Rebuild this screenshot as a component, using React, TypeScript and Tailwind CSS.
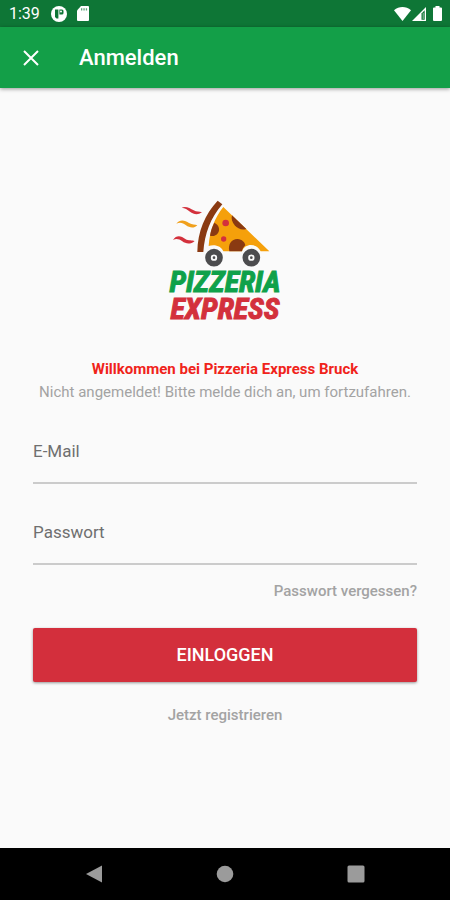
import { useState } from "react";

// ─── Logo ───────────────────────────────────────────────────────────────────

function PizzaCar() {
    return (
        <svg viewBox="30 24 330 210" className="h-[70px] w-[110px]" aria-hidden="true">
            <g fill="#d3303c">
                <path d="M65 53 C76 47 90 54 101 61 C110 66 118 64 126 67 C112 77 100 72 90 65 C81 58 76 54 65 53Z" />
                <path d="M39 150 C50 133 64 138 76 147 C86 154 96 149 104 153 C92 164 77 162 67 154 C57 147 49 145 39 150Z" />
            </g>
            <path d="M49 101 C60 87 75 91 87 99 C97 105 105 103 112 106 C101 117 88 113 78 106 C69 99 61 96 49 101Z" fill="#f0a01c" />
            <path d="M173 32 L187 43 C151 84 134 132 130 186 L112 186 C113 124 135 72 173 32Z" fill="#8a3a12" />
            <path d="M190 51 L328 184 L302 184 C289 158 254 160 246 184 L190 184 C184 168 164 162 146 168 C149 123 164 83 190 51Z" fill="#f5a00b" />
            <g fill="#8a3a12">
                <path d="M216 76 L259 117 C246 121 233 117 224 106 C216 96 213 86 216 76Z" />
                <path d="M163 98 C177 104 181 119 174 129 C168 138 158 140 150 137 C152 122 157 109 163 98Z" />
                <path d="M208 184 C203 162 216 146 233 147 C246 148 255 157 256 166 C251 171 247 177 246 184Z" />
            </g>
            <circle cx="197" cy="99" r="10" fill="#d3303c" />
            <circle cx="191" cy="147" r="8" fill="#d3303c" />
            <g fill="#fafafa" stroke="#4c4c4e" strokeWidth="17">
                <circle cx="162" cy="203" r="18" />
                <circle cx="274" cy="203" r="18" />
            </g>
            <circle cx="162" cy="203" r="4" fill="#4c4c4e" />
            <circle cx="274" cy="203" r="4" fill="#4c4c4e" />
        </svg>
    );
}

function Logo() {
    return (
        <div className="flex flex-col items-center">
            <PizzaCar />
            <div className="text-center font-['Roboto_Condensed','Liberation_Sans_Narrow',Roboto,sans-serif] text-[30px] leading-[27px] font-bold italic">
                <p className="text-[#0fa14a] [-webkit-text-stroke:1px_#0fa14a]">PIZZERIA</p>
                <p className="text-[#d3303c] [-webkit-text-stroke:1px_#d3303c]">EXPRESS</p>
            </div>
        </div>
    );
}

// ─── System bars ────────────────────────────────────────────────────────────

function StatusBar() {
    return (
        <div className="flex h-[27px] items-center bg-[#0e7636] pr-2 pl-[9px] text-white">
            <span className="text-base leading-none">1:39</span>
            <svg viewBox="0 0 16 16" className="ml-[11px] size-4" aria-hidden="true">
                <circle cx="8" cy="8" r="8" fill="#fff" />
                <path d="M4 3.5h3.4v9H5.5L4 11z" fill="#0e7636" />
                <path d="M8.400 3.500H11a1.500 1.500 0 0 1 1.500 1.500v2A1.500 1.500 0 0 1 11 8.500H8.400z" fill="#0e7636" />
                <circle cx="10" cy="5.600" r="1" fill="#fff" />
            </svg>
            <svg viewBox="0 0 12 15" className="ml-[10px] h-[15px] w-3" aria-hidden="true">
                <path d="M4 0h7a1 1 0 0 1 1 1v13a1 1 0 0 1-1 1H1a1 1 0 0 1-1-1V4.5z" fill="#fff" />
                <path d="M4 2.2h1.3v2.3H4zM6.4 2.2h1.3v2.3H6.4zM8.8 2.2h1.3v2.3H8.8z" fill="#5fa67b" />
            </svg>
            <svg viewBox="0 0 17 14" className="ml-auto h-[14px] w-[17px]" aria-hidden="true">
                <path d="M0 3.2C5-1 12-1 17 3.2L8.5 14z" fill="#fff" />
            </svg>
            <svg viewBox="0 0 14 14" className="ml-[1px] size-[14px]" aria-hidden="true">
                <path d="M0 14 14 0v14z" fill="#fff" />
                <path d="M9.500 6.500 12.700 3.300v9.400H9.500z" fill="#0e7636" />
                <path d="M10.700 6h1v6h-1z" fill="#8fbf9f" />
            </svg>
            <svg viewBox="0 0 9 15" className="ml-[7px] h-[15px] w-[9px]" aria-hidden="true">
                <path d="M2.5 0h4v1.5H8a1 1 0 0 1 1 1V14a1 1 0 0 1-1 1H1a1 1 0 0 1-1-1V2.5a1 1 0 0 1 1-1h1.5z" fill="#fff" />
            </svg>
        </div>
    );
}

function NavigationBar() {
    return (
        <nav className="grid h-[52px] grid-cols-3 place-items-center bg-black px-7 text-[#9b9b9b]">
            <button type="button" aria-label="Zurück">
                <svg viewBox="0 0 18 18" className="size-[18px]">
                    <path d="M17 .5v17L1 9z" fill="currentColor" />
                </svg>
            </button>
            <button type="button" aria-label="Startseite">
                <svg viewBox="0 0 18 18" className="size-[18px]">
                    <circle cx="9" cy="9" r="8.3" fill="currentColor" />
                </svg>
            </button>
            <button type="button" aria-label="Übersicht">
                <svg viewBox="0 0 18 18" className="size-[18px]">
                    <rect x=".5" y=".5" width="17" height="17" rx="1.5" fill="currentColor" />
                </svg>
            </button>
        </nav>
    );
}

// ─── Text field ─────────────────────────────────────────────────────────────

function TextField({ id, label, type }: { id: string; label: string; type: "email" | "password" }) {
    const [value, setValue] = useState("");

    return (
        <div className="grid h-[66px] items-center border-b-2 border-[#cbcbcb]">
            <label
                htmlFor={id}
                className={`col-start-1 row-start-1 pt-[3px] text-[17px] text-[#6f6f6f] ${value ? "invisible" : ""}`}
            >
                {label}
            </label>
            <input
                id={id}
                type={type}
                value={value}
                onChange={(e) => setValue(e.target.value)}
                className="col-start-1 row-start-1 h-full w-full bg-transparent text-[17px] text-[#222222] outline-none"
            />
        </div>
    );
}

// ─── Page ───────────────────────────────────────────────────────────────────

export default function App() {
    return (
        <div className="flex min-h-screen flex-col bg-[#fafafa] font-[Roboto,sans-serif]">
            <StatusBar />

            {/* App bar */}
            <header className="flex h-[61px] items-center bg-[#139f48] pl-[23px] text-white shadow-[0_1px_4px_rgba(0,0,0,0.4)]">
                <button type="button" aria-label="Schließen">
                    <svg viewBox="0 0 16 16" className="size-4" stroke="currentColor" strokeWidth="2">
                        <path d="M1 1 15 15M15 1 1 15" />
                    </svg>
                </button>
                <h1 className="ml-10 text-[22px] font-medium">Anmelden</h1>
            </header>

            {/* Login */}
            <main className="flex flex-1 flex-col px-[33px] pt-[110px]">
                <Logo />

                <div className="mt-9 text-center text-[15px] leading-[23px]">
                    <p className="font-bold text-[#f0231a]">Willkommen bei Pizzeria Express Bruck</p>
                    <p className="text-[#a3a3a3]">Nicht angemeldet! Bitte melde dich an, um fortzufahren.</p>
                </div>

                <form className="mt-[14px] flex flex-col" onSubmit={(e) => e.preventDefault()}>
                    <div className="flex flex-col gap-[15px]">
                        <TextField id="email" label="E-Mail" type="email" />
                        <TextField id="password" label="Passwort" type="password" />
                    </div>
                    <a href="#passwort" className="mt-[15px] self-end text-[15px] leading-[22px] font-medium text-[#a3a3a3]">
                        Passwort vergessen?
                    </a>
                    <button
                        type="submit"
                        className="mt-[26px] h-[54px] rounded-[2px] bg-[#d32f3c] text-lg font-medium text-white shadow-[0_1px_3px_rgba(0,0,0,0.4)]"
                    >
                        EINLOGGEN
                    </button>
                    <a href="#registrieren" className="mt-[22px] self-center text-[15px] leading-[22px] font-medium text-[#a3a3a3]">
                        Jetzt registrieren
                    </a>
                </form>
            </main>

            <NavigationBar />
        </div>
    );
}
